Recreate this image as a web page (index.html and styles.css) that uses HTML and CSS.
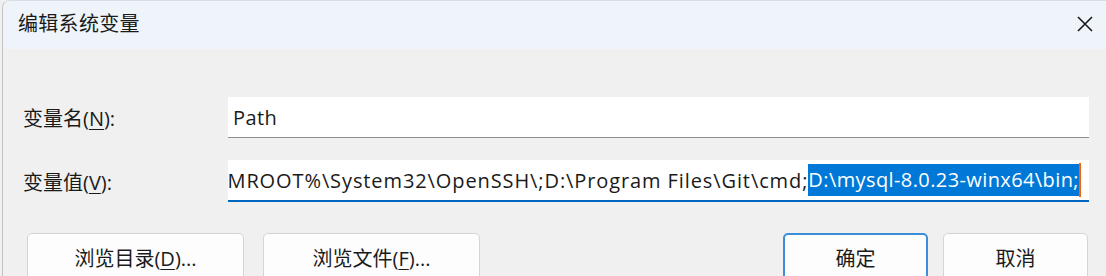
FILE: index.html
```html
<!DOCTYPE html>
<html lang="zh-CN">
<head>
    <meta charset="UTF-8">
    <meta name="viewport" content="width=device-width, initial-scale=1.0">
    <title>编辑系统变量</title>
    <link rel="stylesheet" href="styles.css">
</head>
<body>

<div class="window">
    <div class="titlebar">
        <span class="title">编辑系统变量</span>
        <span class="close">
            <svg width="16" height="16" viewBox="0 0 16 16">
                <path d="M1 1 L15 15 M15 1 L1 15" stroke="#1a1a1a" stroke-width="1.6" fill="none"/>
            </svg>
        </span>
    </div>

    <div class="content">
        <div class="row">
            <label class="label">变量名(<u>N</u>):</label>
            <div class="field">
                <span class="value">Path</span>
            </div>
        </div>
        <div class="row">
            <label class="label">变量值(<u>V</u>):</label>
            <div class="field focused">
                <span class="value scroll"><span class="plain">%SYSTEMROOT%\System32\OpenSSH\;D:\Program Files\Git\cmd;</span><span class="selected">D:\mysql-8.0.23-winx64\bin;</span><span class="caret"></span></span>
            </div>
        </div>

        <div class="buttons">
            <button class="btn wide">浏览目录(<u>D</u>)...</button>
            <button class="btn wide">浏览文件(<u>F</u>)...</button>
            <span class="spacer"></span>
            <button class="btn primary">确定</button>
            <button class="btn">取消</button>
        </div>
    </div>
</div>

</body>
</html>
```

FILE: styles.css
```css
body {
    margin: 0;
    padding: 0;
    background-color: #f0f0f0;
    font-family: "Open Sans", "Noto Sans CJK SC", sans-serif;
    font-size: 18px;
    color: #1a1a1a;
    overflow: hidden;
}
.window {
    margin-left: 2px;
    height: 276px;
    border-left: 1px solid #c4c4c4;
    border-top: 1px solid #d6dde3;
    border-top-left-radius: 8px;
    overflow: hidden;
    background-color: #f0f0f0;
}
.titlebar {
    height: 43px;
    padding: 0 13px 5px 15px;
    background-color: #eef4f9;
    display: flex;
    align-items: center;
    justify-content: space-between;
}
.title {
    font-size: 20px;
    letter-spacing: 0.3px;
}
.close {
    display: flex;
    margin-top: 2px;
}
.content {
    padding: 48px 17px 0 20px;
}
.row {
    display: flex;
    align-items: center;
    margin-bottom: 22px;
}
.label {
    width: 205px;
    font-size: 20px;
}
.label u, .btn u {
    text-decoration-thickness: 1px;
    text-underline-offset: 3px;
}
.field {
    flex: 1;
    height: 40px;
    background-color: #ffffff;
    border-bottom: 1px solid #8d8d8d;
    display: flex;
    align-items: center;
    overflow: hidden;
    padding-left: 5px;
    font-size: 20px;
    letter-spacing: 0.4px;
}
.field.focused {
    height: 40px;
    border-bottom: 2px solid #0067c0;
    justify-content: flex-end;
    padding-left: 0;
    padding-right: 8px;
}
.value {
    white-space: nowrap;
}
.scroll {
    display: flex;
    align-items: center;
    flex-shrink: 0;
}
.plain {
    letter-spacing: 0.9px;
}
.selected {
    background-color: #0078d7;
    color: #ffffff;
    line-height: 32px;
}
.caret {
    display: inline-block;
    width: 2px;
    height: 34px;
    background-color: #f7630c;
}
.buttons {
    display: flex;
    margin-top: 31px;
    padding-left: 4px;
    padding-right: 1px;
}
.btn {
    height: 48px;
    padding: 0;
    font-family: inherit;
    font-size: 20px;
    color: #1a1a1a;
    background-color: #fdfdfd;
    border: 1px solid #d4d4d4;
    border-radius: 5px;
    width: 145px;
    margin-right: 15px;
}
.btn.wide {
    width: 217px;
    margin-right: 19px;
}
.btn.primary {
    border: 2px solid #3b8fd9;
}
.btn:last-child {
    margin-right: 0;
}
.spacer {
    flex: 1;
}
```
